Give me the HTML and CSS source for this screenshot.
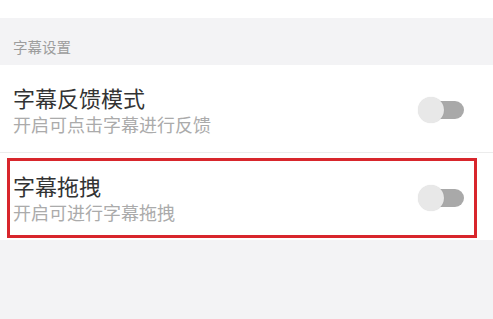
FILE: index.html
```html
<!DOCTYPE html>
<html lang="zh-CN">
<head>
<meta charset="utf-8">
<link rel="stylesheet" href="styles.css">
</head>
<body>
<div class="top"></div>
<div class="section-header">字幕设置</div>
<div class="row row-first">
  <div class="texts">
    <div class="title">字幕反馈模式</div>
    <div class="subtitle">开启可点击字幕进行反馈</div>
  </div>
  <div class="toggle"><span class="track"></span><span class="knob"></span></div>
</div>
<div class="row">
  <div class="texts">
    <div class="title">字幕拖拽</div>
    <div class="subtitle">开启可进行字幕拖拽</div>
  </div>
  <div class="toggle"><span class="track"></span><span class="knob"></span></div>
  <div class="highlight"></div>
</div>
</body>
</html>
```
FILE: styles.css
```css
html, body {
  margin: 0;
  padding: 0;
  background: #f3f3f5;
  font-family: "Noto Sans CJK SC", "Noto Sans", sans-serif;
}
.top {
  height: 18px;
  background: #ffffff;
}
.section-header {
  padding: 19px 13px 8px;
  line-height: 20px;
  font-size: 14.5px;
  color: #9d9d9d;
}
.row {
  position: relative;
  display: flex;
  align-items: center;
  justify-content: space-between;
  background: #ffffff;
  padding: 19px 29px 16px 13px;
}
.row-first {
  border-bottom: 1px solid #ececec;
}
.title {
  font-size: 22px;
  line-height: 26px;
  color: #333333;
}
.subtitle {
  margin-top: 2px;
  font-size: 18px;
  line-height: 24px;
  color: #ababab;
}
.toggle {
  position: relative;
  width: 46px;
  height: 26px;
  flex: none;
}
.track {
  position: absolute;
  right: 0;
  top: 4px;
  width: 40px;
  height: 18px;
  border-radius: 9px;
  background: #a9a9a9;
}
.knob {
  position: absolute;
  left: 0;
  top: 0;
  width: 26px;
  height: 26px;
  border-radius: 50%;
  background: #e8e8e8;
  box-shadow: 0 0 1px rgba(0,0,0,0.15);
}
.highlight {
  position: absolute;
  left: 7px;
  top: 5px;
  right: 16px;
  bottom: 2px;
  border: 3px solid #d8262c;
  pointer-events: none;
}
```
